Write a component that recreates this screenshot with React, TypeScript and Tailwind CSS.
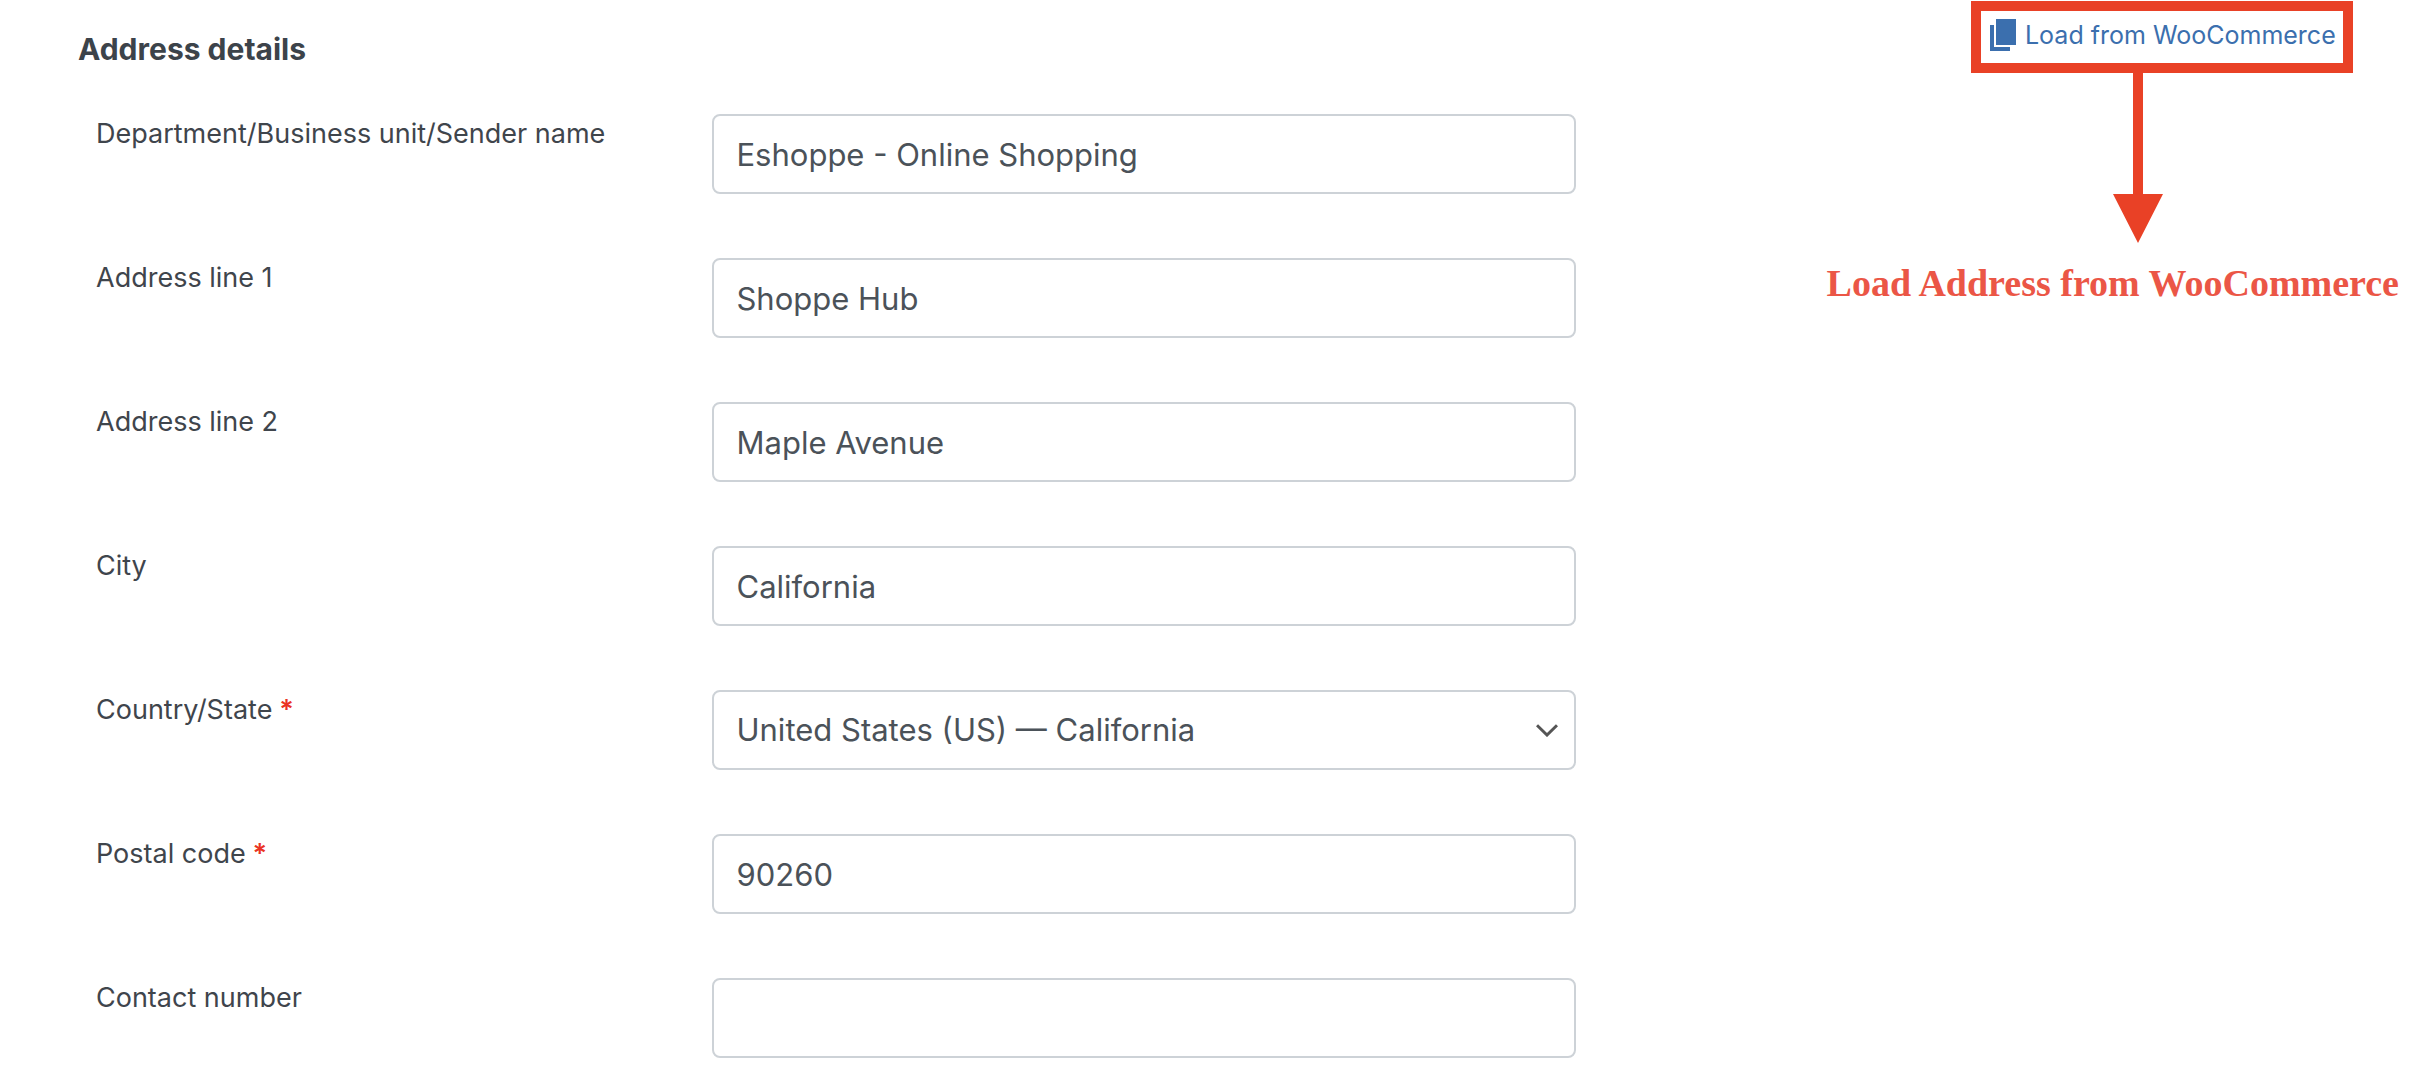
import React from 'react';

type Field = {
  id: string;
  label: string;
  value: string;
  required?: boolean;
  kind?: 'text' | 'select';
};

const FIELDS: Field[] = [
  { id: 'sender', label: 'Department/Business unit/Sender name', value: 'Eshoppe - Online Shopping' },
  { id: 'address1', label: 'Address line 1', value: 'Shoppe Hub' },
  { id: 'address2', label: 'Address line 2', value: 'Maple Avenue' },
  { id: 'city', label: 'City', value: 'California' },
  { id: 'state', label: 'Country/State', value: 'United States (US) — California', required: true, kind: 'select' },
  { id: 'postal', label: 'Postal code', value: '90260', required: true },
  { id: 'contact', label: 'Contact number', value: '' },
];

const CONTROL =
  'h-20 w-full rounded-lg border-2 border-[#cdd2d7] bg-white px-[22px] text-[31px] leading-10 text-[#4b5259] outline-none';

function FieldRow({ id, label, value, required, kind }: Field) {
  return (
    <div className="grid grid-cols-[5fr_7fr] items-start">
      <label htmlFor={id} className="text-[27px] leading-10 text-[#3f454c]">
        {label}
        {required && <span className="font-semibold text-[#ea3323]"> *</span>}
      </label>
      {kind === 'select' ? (
        <div className="relative">
          <select id={id} defaultValue={value} className={`${CONTROL} appearance-none`}>
            <option>{value}</option>
          </select>
          <svg
            aria-hidden="true"
            viewBox="0 0 22 13"
            className="pointer-events-none absolute inset-y-0 right-[18px] my-auto h-[13px] w-[22px]"
            fill="none"
            stroke="#555"
            strokeWidth="3"
          >
            <path d="M1 1.2 11 11l10-9.8" />
          </svg>
        </div>
      ) : (
        <input id={id} type="text" defaultValue={value} className={CONTROL} />
      )}
    </div>
  );
}

export default function App() {
  return (
    <main className="grid grid-cols-[65%_35%] overflow-hidden bg-white pb-3 font-['Inter',sans-serif]">
      <form className="pt-[29px]">
        <h2 className="pl-[78px] text-[30px] leading-10 font-bold text-[#3c434a]">Address details</h2>
        <div className="flex flex-col gap-16 pt-[45px] pl-24">
          {FIELDS.map((f) => (
            <FieldRow key={f.id} {...f} />
          ))}
        </div>
      </form>
      <aside className="flex flex-col items-end pt-px pr-[25px]">
        <div className="mr-[46px] flex h-[72px] w-[382px] items-start border-10 border-[#e94126]">
          <a href="#load" className="flex items-start gap-2 pt-2 pl-2 whitespace-nowrap text-[#3b6fae]">
            <svg aria-hidden="true" viewBox="0 0 28 32" className="h-8 w-7 shrink-0" fill="currentColor">
              <path d="M7 0h20v26H7zM1 6h4v22h16v4H1z" />
            </svg>
            <span className="text-[25px] leading-8">Load from WooCommerce</span>
          </a>
        </div>
        <svg aria-hidden="true" viewBox="0 0 50 170" className="mr-[236px] h-[170px] w-[50px]" fill="#e94126">
          <path d="M20 0h10v121h20L25 170 0 121h20z" />
        </svg>
        <p className="pt-4 font-['Liberation_Serif',serif] text-[38px] leading-12 font-bold whitespace-nowrap text-[#eb5646]">
          Load Address from WooCommerce
        </p>
      </aside>
    </main>
  );
}
